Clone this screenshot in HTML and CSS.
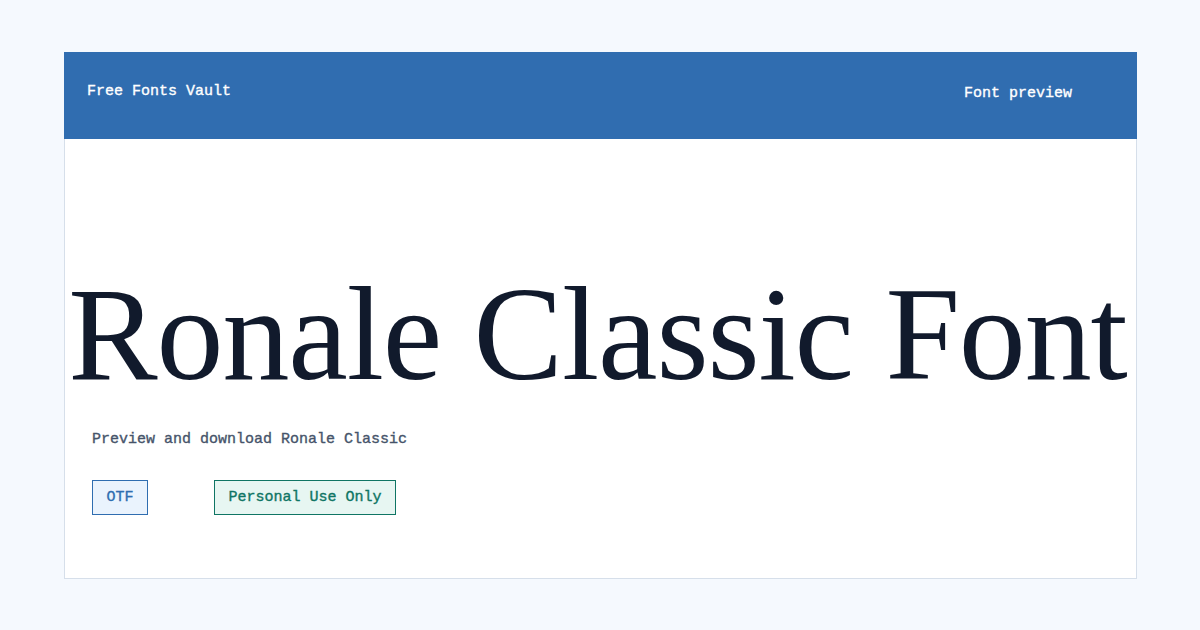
FILE: index.html
```html
<!DOCTYPE html>
<html lang="en">
<head>
    <meta charset="UTF-8">
    <meta name="viewport" content="width=device-width, initial-scale=1.0">
    <title>Ronale Classic Font - Free Fonts Vault</title>
    <link rel="stylesheet" href="styles.css">
</head>
<body>
    <div class="card">
        <header>
            <div class="logo">Free Fonts Vault</div>
            <div class="tag">Font preview</div>
        </header>

        <main>
            <h1 class="font-name">Ronale Classic Font</h1>
            <p class="subtitle">Preview and download Ronale Classic</p>
            <div class="badges">
                <span class="badge format">OTF</span>
                <span class="badge license">Personal Use Only</span>
            </div>
        </main>
    </div>
</body>
</html>
```

FILE: styles.css
```css
* {
    margin: 0;
    padding: 0;
    box-sizing: border-box;
}

body {
    width: 1200px;
    height: 630px;
    background-color: #f5f9fe;
    font-family: 'Liberation Mono', 'DejaVu Sans Mono', monospace;
    font-size: 15px;
    -webkit-text-stroke: 0.35px currentColor;
    padding: 52px 63px 0 64px;
}

.card {
    height: 527px;
    background: #ffffff;
    border: 1px solid #d6dfea;
    border-top: none;
}

/* Header Styles */
header {
    height: 87px;
    margin: 0 -1px;
    background-color: #306db0;
    color: #ffffff;
    display: flex;
    justify-content: space-between;
    align-items: flex-start;
    padding: 31px 65px 0 23px;
}

.tag {
    margin-top: 2px;
}

/* Main Content Styles */
main {
    padding: 0 26px;
}

.font-name {
    font-family: 'Liberation Serif', 'DejaVu Serif', serif;
    font-weight: normal;
    font-size: 134px;
    letter-spacing: -1.1px;
    line-height: 1;
    color: #111a2c;
    -webkit-text-stroke: 0;
    text-align: center;
    white-space: nowrap;
    margin: 128px -27px 0 -33px;
}

.subtitle {
    color: #46546a;
    margin: 30px 0 0 1px;
}

.badges {
    display: flex;
    gap: 66px;
    margin-top: 32px;
    padding-left: 1px;
}

.badge {
    height: 35px;
    line-height: 33px;
    border: 1px solid;
    padding: 0 13.5px;
}

.format {
    color: #2f6db0;
    background: #eaf3fd;
    border-color: #2f6db0;
}

.license {
    color: #0f7564;
    background: #e7f6f2;
    border-color: #0f7564;
}
```
